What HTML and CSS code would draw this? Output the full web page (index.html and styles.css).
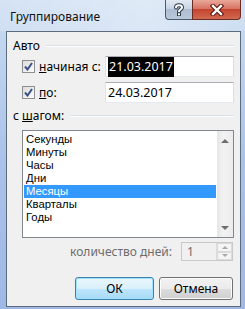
FILE: index.html
```html
<!DOCTYPE html>
<html lang="ru">
<head>
    <meta charset="UTF-8" />
    <title>Группирование</title>
    <link rel="stylesheet" href="styles.css">
</head>
<body>
    <div class="window">
        <div class="titlebar">
            <span class="title">Группирование</span>
            <div class="caption-btns">
                <div class="cap-btn help">
                    <svg width="12" height="13" viewBox="0 0 12 13">
                        <path d="M3 4.5 C3 1.5 9 1.5 9 4.5 C9 6.5 6 6.5 6 8.5" fill="none" stroke="#2b3a4e" stroke-width="4" stroke-linecap="round"/>
                        <path d="M3 4.5 C3 1.5 9 1.5 9 4.5 C9 6.5 6 6.5 6 8.5" fill="none" stroke="#fff" stroke-width="2" stroke-linecap="round"/>
                        <rect x="4" y="9.5" width="4" height="3.5" fill="#2b3a4e"/>
                        <rect x="5" y="10.3" width="2" height="2" fill="#fff"/>
                    </svg>
                </div>
                <div class="cap-btn close">
                    <svg width="14" height="12" viewBox="0 0 14 12">
                        <path d="M3 2 L11 10 M11 2 L3 10" stroke="#5a1a12" stroke-width="4.5" stroke-linecap="square"/>
                        <path d="M3 2 L11 10 M11 2 L3 10" stroke="#fff" stroke-width="2.4" stroke-linecap="square"/>
                    </svg>
                </div>
            </div>
        </div>

        <div class="client">
            <div class="group-head">
                <span>Авто</span>
                <div class="sep"></div>
            </div>

            <div class="field-row first">
                <label class="check">
                    <span class="box">
                        <svg width="9" height="9" viewBox="0 0 9 9"><path d="M1 4.5 L3.5 7.5 L8 1" fill="none" stroke="#3b5189" stroke-width="2"/></svg>
                    </span>
                    <span><u>н</u>ачиная с:</span>
                </label>
                <div class="textbox"><span class="selected">21.03.2017</span></div>
            </div>

            <div class="field-row">
                <label class="check">
                    <span class="box">
                        <svg width="9" height="9" viewBox="0 0 9 9"><path d="M1 4.5 L3.5 7.5 L8 1" fill="none" stroke="#3b5189" stroke-width="2"/></svg>
                    </span>
                    <span><u>п</u>о:</span>
                </label>
                <div class="textbox">24.03.2017</div>
            </div>

            <div class="group-head second">
                <span>с <u>ш</u>агом:</span>
                <div class="sep"></div>
            </div>

            <div class="listbox">
                <ul class="items">
                    <li>Секунды</li>
                    <li>Минуты</li>
                    <li>Часы</li>
                    <li>Дни</li>
                    <li class="active">Месяцы</li>
                    <li>Кварталы</li>
                    <li>Годы</li>
                </ul>
                <div class="scrollbar">
                    <span class="arrow up"></span>
                    <span class="arrow down"></span>
                </div>
            </div>

            <div class="days-row">
                <span class="days-label">количество дней:</span>
                <div class="spinner">
                    <span class="spin-value">1</span>
                    <div class="spin-btns">
                        <span class="spin-btn"><span class="tri up"></span></span>
                        <span class="spin-btn"><span class="tri down"></span></span>
                    </div>
                </div>
            </div>

            <div class="buttons">
                <button class="btn ok">ОК</button>
                <button class="btn cancel">Отмена</button>
            </div>
        </div>
    </div>
</body>
</html>
```

FILE: styles.css
```css
html,
body {
    margin: 0;
    padding: 0;
}

body {
    width: 245px;
    height: 309px;
    overflow: hidden;
    font-family: 'Noto Sans', 'Liberation Sans', sans-serif;
    font-size: 12px;
    color: #000;
    background: linear-gradient(to bottom, #cadcf1 0, #c2d6ef 40px, #aac2ea 160px, #9fb8e6 309px);
}

.window {
    display: flex;
    flex-direction: column;
    height: 309px;
}

/* Title bar */
.titlebar {
    height: 31px;
    display: flex;
    justify-content: space-between;
    align-items: flex-start;
    background: linear-gradient(to right, rgba(255, 255, 255, 0.2), rgba(255, 255, 255, 0.4) 60%, rgba(255, 255, 255, 0.15));
}

.title {
    padding: 10px 0 0 10px;
    line-height: 14px;
    color: #111;
}

.caption-btns {
    display: flex;
    margin-right: 4px;
}

.cap-btn {
    height: 20px;
    display: flex;
    align-items: center;
    justify-content: center;
    box-sizing: border-box;
    border: 1px solid #4c5a6e;
    border-top: none;
}

.cap-btn.help {
    width: 27px;
    border-radius: 0 0 0 4px;
    border-right: none;
    background: linear-gradient(to bottom, #e2e9f2 0, #c9d5e3 45%, #aebdd1 50%, #b9c8da 100%);
}

.cap-btn.close {
    width: 49px;
    border-radius: 0 0 4px 0;
    border-color: #6b2b22;
    background: linear-gradient(to bottom, #e9a899 0, #d77463 45%, #c4452f 50%, #d06b50 100%);
}

/* Client area */
.client {
    flex: 1;
    margin: 0 4px 2px 6px;
    border: 1px solid #5d6c7d;
    background: #f0f0f0;
    padding: 0 6px 0 6px;
    display: flex;
    flex-direction: column;
}

.group-head {
    display: flex;
    align-items: center;
    margin-top: 7px;
    line-height: 13px;
    height: 13px;
}

.group-head.second {
    margin-top: 6px;
}

.sep {
    flex: 1;
    height: 0;
    margin-left: 6px;
    margin-top: 1px;
    border-top: 1px solid #d5dfe5;
    border-bottom: 1px solid #fff;
}

.field-row {
    display: flex;
    justify-content: space-between;
    align-items: center;
    padding-left: 9px;
    margin-top: 5px;
    height: 21px;
}

.field-row.first {
    margin-top: 4px;
}

.check {
    display: flex;
    align-items: center;
    gap: 4px;
    line-height: 13px;
}

.box {
    width: 11px;
    height: 11px;
    border: 1px solid #8e8f8f;
    background: linear-gradient(135deg, #dcdcdc, #fdfdfd);
    display: flex;
    align-items: center;
    justify-content: center;
}

.textbox {
    width: 125px;
    height: 19px;
    border: 1px solid #abadb3;
    border-color: #abadb3 #dbdfe6 #e3e9ef #e2e3ea;
    background: #fff;
    padding-left: 2px;
    line-height: 19px;
    font-size: 12.5px;
}

.selected {
    background: #000;
    color: #fff;
    padding: 1px 1px 2px 1px;
}

/* List */
.listbox {
    margin: 8px 0 0 9px;
    height: 106px;
    border: 1px solid #828790;
    background: #fff;
    display: flex;
}

.items {
    flex: 1;
    list-style: none;
    margin: 0;
    padding: 2px 1px 0 1px;
    overflow: hidden;
    font-family: 'Liberation Sans', sans-serif;
    font-size: 11.3px;
}

.items li {
    height: 13px;
    line-height: 13px;
    padding-left: 2px;
}

.items li.active {
    background: #3399ff;
    color: #fff;
}

.scrollbar {
    width: 16px;
    background: linear-gradient(to right, #e6e6e6, #f2f2f2 40%, #ececec);
    display: flex;
    flex-direction: column;
    justify-content: space-between;
    align-items: center;
    padding: 8px 0 7px;
}

.arrow {
    width: 0;
    height: 0;
    border-left: 4px solid transparent;
    border-right: 4px solid transparent;
}

.arrow.up {
    border-bottom: 4px solid #6d6d6d;
}

.arrow.down {
    border-top: 4px solid #6d6d6d;
}

/* Day count */
.days-row {
    display: flex;
    justify-content: flex-end;
    align-items: center;
    gap: 9px;
    margin-top: 4px;
    height: 19px;
    padding-right: 1px;
}

.days-label {
    color: #6d6d6d;
}

.spinner {
    width: 50px;
    height: 17px;
    border: 1px solid #c8c8c8;
    background: #f0f0f0;
    display: flex;
    justify-content: space-between;
}

.spin-value {
    color: #6d6d6d;
    padding-left: 5px;
    line-height: 17px;
}

.spin-btns {
    width: 15px;
    display: flex;
    flex-direction: column;
    border-left: 1px solid #dcdcdc;
}

.spin-btn {
    flex: 1;
    display: flex;
    align-items: center;
    justify-content: center;
    border: 1px solid #dadada;
    background: #f4f4f4;
}

.tri {
    width: 0;
    height: 0;
    border-left: 3px solid transparent;
    border-right: 3px solid transparent;
}

.tri.up {
    border-bottom: 3px solid #a8a8a8;
}

.tri.down {
    border-top: 3px solid #a8a8a8;
}

/* Buttons */
.buttons {
    display: flex;
    justify-content: flex-end;
    gap: 5px;
    margin-top: 16px;
    padding-right: 1px;
}

.btn {
    height: 23px;
    font-family: inherit;
    font-size: 12px;
    color: #000;
    border-radius: 3px;
    padding: 0;
    cursor: pointer;
}

.btn.ok {
    width: 79px;
    border: 1px solid #3c7fb1;
    background: linear-gradient(to bottom, #eaf6fd 0, #d9f0fc 50%, #bee6fd 51%, #a7d9f5 100%);
    box-shadow: inset 0 0 0 1px #9ee4ff;
}

.btn.cancel {
    width: 74px;
    border: 1px solid #707070;
    background: linear-gradient(to bottom, #f2f2f2 0, #ebebeb 50%, #dddddd 51%, #cfcfcf 100%);
    box-shadow: inset 0 0 0 1px #fcfcfc;
}
```
